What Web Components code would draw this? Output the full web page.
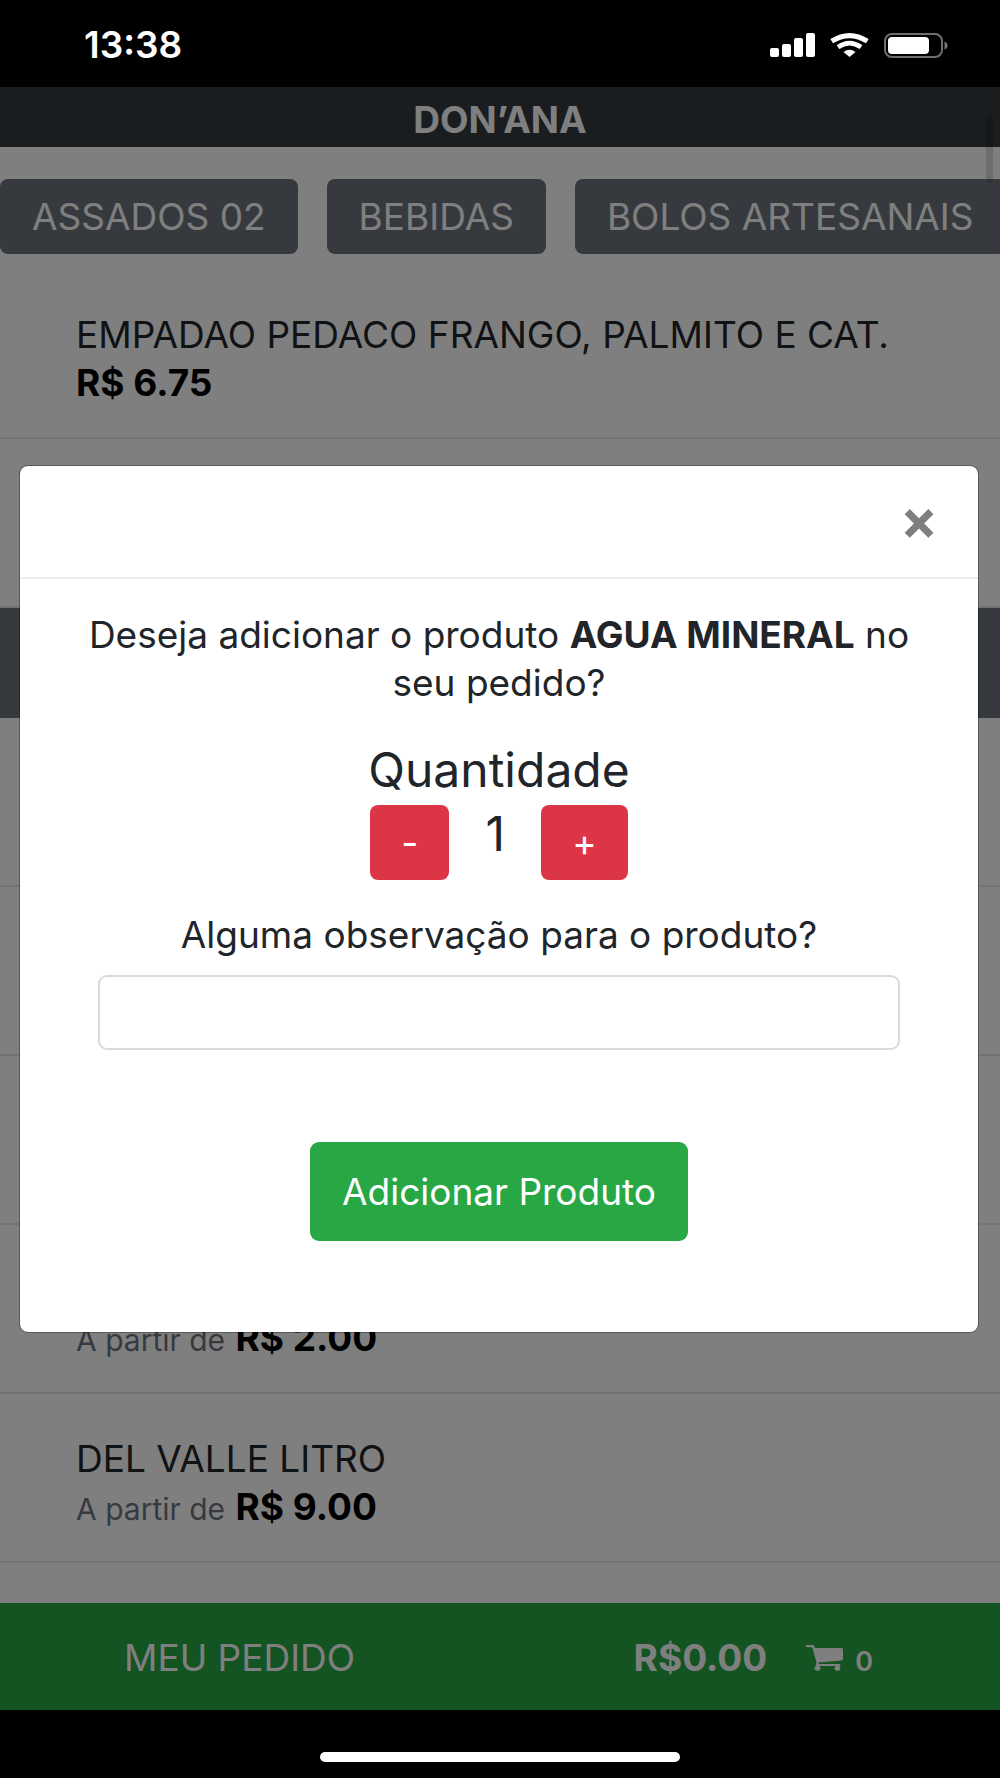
<!DOCTYPE html>
<html lang="pt-BR">
<head>
<meta charset="utf-8">
<meta name="viewport" content="width=device-width, initial-scale=1">
<title>DON’ANA</title>
<style>
  html, body { margin: 0; background: #000; }
  body {
    --text: 37px;
    --line: 48px;
    --big: 48px;
    --small: 30px;
    --green: #28a745;
    --red: #dc3545;
    --gray: #6c757d;
    --dark: #343a40;
    font: 400 var(--text)/var(--line) Inter, "Liberation Sans", sans-serif;
    color: #212529;
  }
</style>
</head>
<body>
<phone-shell>
  <status-bar slot="status" time="13:38"></status-bar>
  <store-header>DON’ANA</store-header>
  <category-nav items="ASSADOS 02|BEBIDAS|BOLOS ARTESANAIS"></category-nav>
  <product-row name="EMPADAO PEDACO FRANGO, PALMITO E CAT." price="R$ 6.75"></product-row>
  <product-row></product-row>
  <section-band></section-band>
  <product-row></product-row>
  <product-row></product-row>
  <product-row></product-row>
  <product-row prefix="A partir de" price="R$ 2.00"></product-row>
  <product-row name="DEL VALLE LITRO" prefix="A partir de" price="R$ 9.00"></product-row>
  <order-bar slot="order" total="R$0.00" count="0">MEU PEDIDO</order-bar>
  <product-dialog slot="dialog">Deseja adicionar o produto <b>AGUA MINERAL</b> no seu pedido?</product-dialog>
</phone-shell>

<script>
const define = (name, render) => customElements.define(name, class extends HTMLElement {
  connectedCallback() {
    if (this.shadowRoot) return;
    this.attachShadow({ mode: 'open' }).innerHTML =
      `<style>*{box-sizing:border-box}button,input{font:inherit;margin:0}</style>` + render(this);
  }
});

define('phone-shell', () => `
<style>
  :host { display: flex; flex-direction: column; min-height: 100vh; background: #000; }
  .screen { flex: 1; display: flex; flex-direction: column; position: relative; background: #fff; }
  main { flex: 1; }
  .thumb { position: absolute; right: 7px; top: 28px; width: 7px; height: 68px; border-radius: 4px; background: rgba(0,0,0,.14); }
  .backdrop { position: absolute; inset: 0; display: flex; align-items: center; justify-content: center; padding: 1px 21px 0 19px; background: rgba(0,0,0,.5); }
  .home { display: flex; justify-content: center; padding: 42px 0 16px; }
  .home i { width: 36%; height: 10px; border-radius: 5px; background: #fff; }
</style>
<slot name="status"></slot>
<div class="screen">
  <main><slot></slot></main>
  <slot name="order"></slot>
  <div class="thumb"></div>
  <div class="backdrop"><slot name="dialog"></slot></div>
</div>
<div class="home"><i></i></div>`);

define('status-bar', el => `
<style>
  :host { display: flex; justify-content: space-between; align-items: center; height: 87px; box-sizing: border-box; padding: 3px 52px 0 84px; background: #000; color: #fff; font-weight: 600; }
  .icons { display: flex; align-items: center; gap: 15px; }
  svg { display: block; }
</style>
<time>${el.getAttribute('time')}</time>
<div class="icons">
  <svg width="45" height="24" viewBox="0 0 45 24" fill="#fff"><rect y="15" width="9" height="9" rx="2"/><rect x="12" y="11" width="9" height="13" rx="2"/><rect x="24" y="5" width="9" height="19" rx="2"/><rect x="36" width="9" height="24" rx="2"/></svg>
  <svg width="39" height="24" viewBox="0 0 39 24" fill="none" stroke="#fff" stroke-width="5"><path d="M1.700 8.200 Q19.500 -3 37.300 8.200"/><path d="M8 14.200 Q19.500 6 31 14.200" stroke-width="4.600"/><path d="M13.500 19 Q19.500 14.500 25.500 19 L19.500 24Z" fill="#fff" stroke="none"/></svg>
  <svg width="64" height="25" viewBox="0 0 64 25"><rect x="1" y="1" width="57" height="23" rx="7" fill="none" stroke="#6e6e6e" stroke-width="2"/><rect x="4" y="4" width="41" height="17" rx="4" fill="#fff"/><path d="M60.500 8.500 Q63.500 9.500 63.500 12.500 Q63.500 15.500 60.500 16.500Z" fill="#777"/></svg>
</div>`);

define('store-header', () => `
<style>
  :host { display: block; background: var(--dark); color: #fff; text-align: center; }
  h1 { margin: 0; padding: 9px 0 3px; font-size: var(--text); line-height: var(--line); font-weight: 700; }
</style>
<h1><slot></slot></h1>`);

define('category-nav', el => `
<style>
  :host { display: block; overflow: hidden; padding: 32px 0 16px; }
  nav { display: flex; gap: 29px; }
  button { flex: none; height: 75px; padding: 0 32px; border: 0; border-radius: 8px; background: var(--gray); color: #fff; white-space: nowrap; }
</style>
<nav>${el.getAttribute('items').split('|').map(t => `<button type="button">${t}</button>`).join('')}</nav>`);

define('product-row', el => {
  const name = el.getAttribute('name'), price = el.getAttribute('price'), prefix = el.getAttribute('prefix');
  return `
<style>
  :host { display: flex; flex-direction: column; justify-content: flex-end; box-sizing: border-box; min-height: 169px; padding: 41px 76px 30px; border-bottom: 2px solid #e4e6e8; }
  div { color: #212529; }
  small { font-size: var(--small); line-height: 1; color: var(--gray); }
  b { font-weight: 700; color: #000; }
</style>
${name ? `<div>${name}</div>` : ''}
${price ? `<div>${prefix ? `<small>${prefix}</small> ` : ''}<b>${price}</b></div>` : ''}`;
});

define('section-band', () => `
<style>:host { display: block; height: 110px; background: var(--gray); }</style>`);

define('order-bar', el => `
<style>
  :host { display: flex; justify-content: space-between; align-items: center; height: 107px; padding: 2px 127px 0 124px; box-sizing: border-box; background: var(--green); color: #fff; }
  .sum { display: flex; align-items: baseline; font-weight: 700; }
  svg { margin: 0 12px 0 39px; align-self: center; }
  small { font-size: 27px; line-height: 1; font-weight: 600; }
</style>
<span><slot></slot></span>
<span class="sum">${el.getAttribute('total')}
  <svg width="37" height="26" viewBox="0 0 37 26" fill="#fff" aria-hidden="true"><path d="M1 0H6.500Q8 0 8.500 1.500L8.800 3H35.500Q37 3 37 4.500V14Q37 15.300 35.500 15.500L12.500 17.500L12.800 19H33.500Q34.500 19 34.500 20T33.500 21H11Q9.700 21 9.700 20L10.500 17.800L6.300 2.300H1Q0 2.300 0 1.200T1 0Z"/><ellipse cx="11.500" cy="23.300" rx="2.900" ry="2.500"/><ellipse cx="31.500" cy="23.300" rx="2.900" ry="2.500"/></svg>
  <small>${el.getAttribute('count')}</small>
</span>`);

define('quantity-stepper', () => `
<style>
  :host { display: flex; justify-content: center; align-items: flex-start; }
  button { height: 75px; padding: 0 31px; border: 0; border-radius: 8px; background: var(--red); color: #fff; }
  output { width: 92px; text-align: center; font-size: var(--big); line-height: 58px; }
</style>
<button type="button" aria-label="Diminuir">-</button>
<output>1</output>
<button type="button" aria-label="Aumentar">+</button>`);

define('product-dialog', () => `
<style>
  :host { display: block; flex: 1; box-sizing: border-box; background: #fff; border: 1px solid rgba(0,0,0,.3); border-radius: 9px; background-clip: padding-box; text-align: center; }
  header { display: flex; justify-content: flex-end; align-items: center; height: 113px; padding: 0 31px 4px; border-bottom: 2px solid #ededed; }
  .close { width: 56px; height: 56px; padding: 0; border: 0; background: none; color: #7f7f7f; font-size: 56px; line-height: 56px; font-weight: 700; }
  .body { padding: 32px 48px 91px; }
  p { margin: 0; }
  h2 { margin: 34px 0 6px; font-size: var(--big); line-height: 58px; font-weight: 400; }
  .note { display: flex; flex-direction: column; gap: 16px; margin: 31px 30px 92px; }
  input { width: 100%; height: 75px; padding: 0 24px; border: 2px solid #d9dadc; border-radius: 9px; background: #fff; }
  .add { height: 99px; padding: 0 32px; border: 0; border-radius: 9px; background: var(--green); color: #fff; }
</style>
<header><button class="close" type="button" aria-label="Fechar">×</button></header>
<div class="body">
  <p><slot></slot></p>
  <h2>Quantidade</h2>
  <quantity-stepper></quantity-stepper>
  <div class="note">
    <label for="obs">Alguma observação para o produto?</label>
    <input id="obs" type="text">
  </div>
  <button class="add" type="button">Adicionar Produto</button>
</div>`);
</script>
</body>
</html>
